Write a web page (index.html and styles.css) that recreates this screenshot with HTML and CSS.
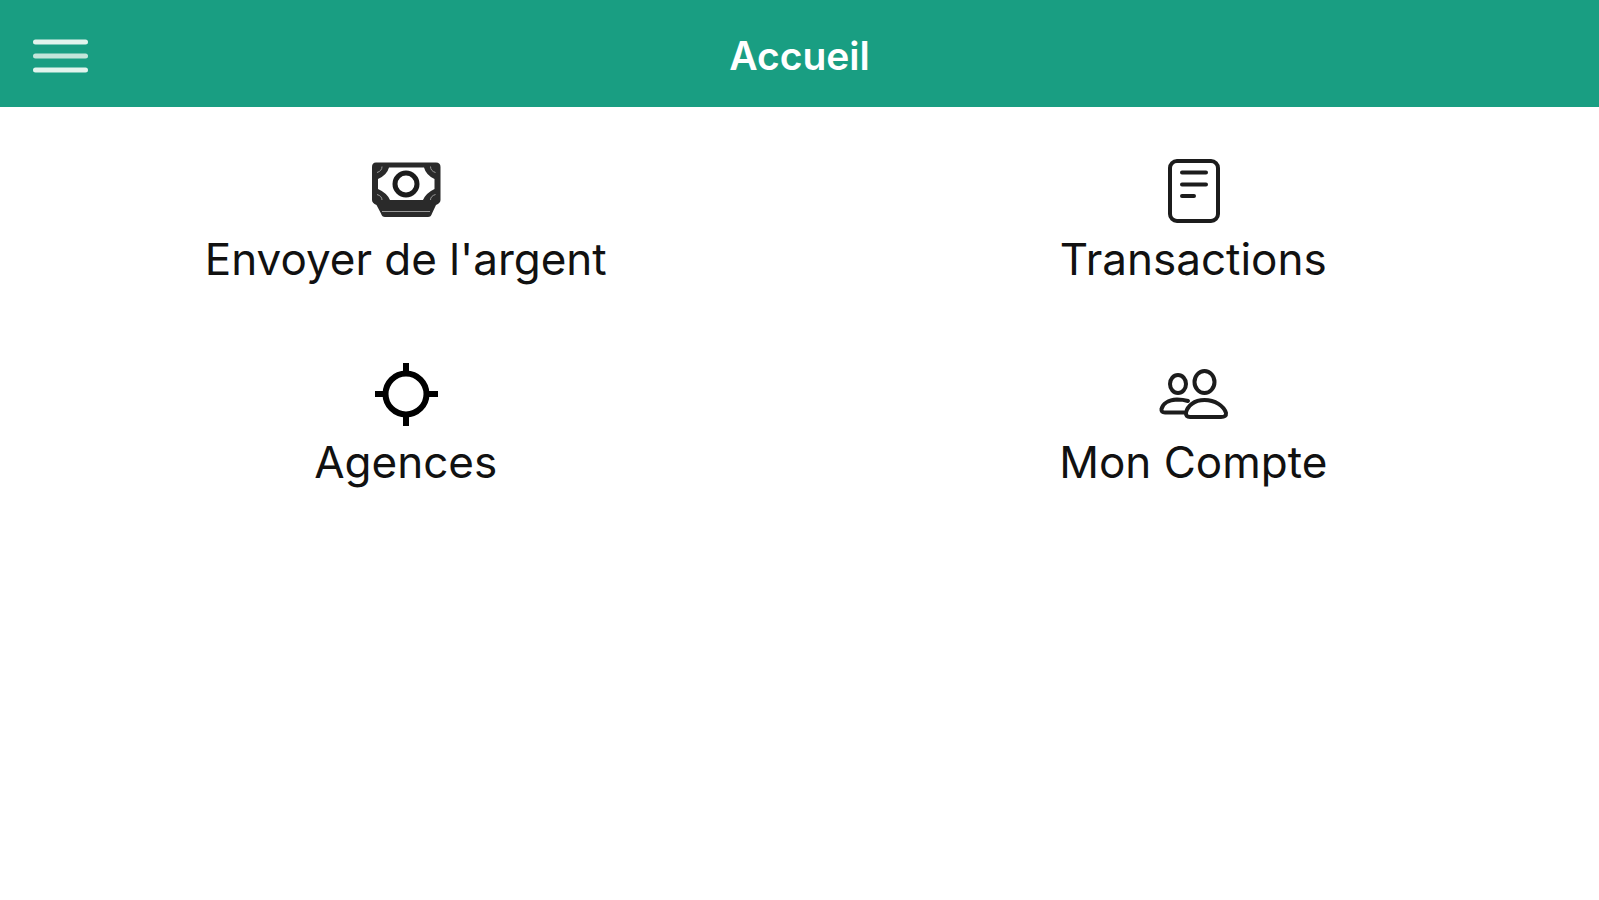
FILE: index.html
```html
<!DOCTYPE html>
<html lang="fr">
<head>
<meta charset="utf-8">
<meta name="viewport" content="width=device-width, initial-scale=1">
<title>Accueil</title>
<link rel="stylesheet" href="styles.css">
</head>
<body>
<header class="bar">
  <button class="menu" type="button" aria-label="Menu">
    <svg class="menu-icon" viewBox="0 0 56 34" aria-hidden="true">
      <path d="M3.500 3h50M3.500 31h50"/>
      <path class="middle" d="M3.500 17h50"/>
    </svg>
  </button>
  <h1 class="title">Accueil</h1>
</header>
<main class="grid">
  <a class="tile" href="#envoyer">
    <svg class="icon" viewBox="0 0 68 68" aria-hidden="true">
      <path class="solid" fill-rule="evenodd" d="M4 5.500H64Q68.500 5.500 68.500 10V43Q68.500 46 64 48L60 56.500Q59 60 56 60H13Q10 60 9 56.500L4.500 48Q0 46 0 43V10Q0 5.500 4 5.500ZM17 10.500Q15 18 6 22V32Q15 36 18 43H51Q54 36 62.500 32V22Q54 18 52 10.500Z"/>
      <circle class="line ring" cx="34" cy="27" r="11"/>
      <path class="slit" d="M10 9.500Q10 14 5 15.500M58.500 9.500Q58.500 14 63.500 15.500M10 43Q10 39 5 37.500M58.500 43Q58.500 39 63.500 37.500M10 54.500H58"/>
    </svg>
    <span class="label">Envoyer de l'argent</span>
  </a>
  <a class="tile" href="#transactions">
    <svg class="icon" viewBox="0 0 68 68" aria-hidden="true">
      <rect class="line" x="11" y="4" width="48" height="60" rx="7"/>
      <path class="line round" d="M23 15.500H47M23 27.500H47M23 39H35"/>
    </svg>
    <span class="label">Transactions</span>
  </a>
  <a class="tile" href="#agences">
    <svg class="icon" viewBox="0 0 68 68" aria-hidden="true">
      <circle class="line heavy" cx="34" cy="34" r="20.500"/>
      <path class="line heavy" d="M34 3V14M34 54V66M3 34H14M54 34H66"/>
    </svg>
    <span class="label">Agences</span>
  </a>
  <a class="tile" href="#compte">
    <svg class="icon" viewBox="0 0 68 68" aria-hidden="true">
      <ellipse class="line" cx="45.500" cy="22" rx="10" ry="11"/>
      <ellipse class="line" cx="19" cy="24" rx="8" ry="9"/>
      <path class="line" d="M45.500 40C35 40 28.500 46 27 52.500Q26.500 57 31 57H62Q67.500 57 67 53C65 46 56 40 45.500 40Z"/>
      <path class="line round" d="M29 41Q24 39.500 18 39.500C9 40 3.500 44 2.500 49Q2 52.500 6 52.500H25"/>
    </svg>
    <span class="label">Mon Compte</span>
  </a>
</main>
</body>
</html>
```
FILE: styles.css
```css
* {
  box-sizing: border-box;
}

body {
  margin: 0;
  background: #fff;
  color: #111;
  font-family: Inter, "Liberation Sans", sans-serif;
}

.bar {
  display: grid;
  grid-template-columns: 1fr auto 1fr;
  align-items: center;
  padding: 30px 32px 25px;
  background: #199e82;
  color: #fff;
}

.menu {
  justify-self: start;
  display: flex;
  padding: 0;
  border: 0;
  background: none;
  color: #e2f4ed;
  cursor: pointer;
}

.menu-icon {
  width: 56px;
  height: 34px;
  fill: none;
  stroke: currentColor;
  stroke-width: 5;
  stroke-linecap: round;
}

.middle {
  stroke: #c3e5da;
}

.title {
  margin: 0;
  font-size: 39px;
  line-height: 52px;
  font-weight: 600;
}

.grid {
  display: grid;
  grid-template-columns: 1fr 1fr;
  row-gap: 71px;
  padding: 50px 12px;
}

.tile {
  display: flex;
  flex-direction: column;
  align-items: center;
  color: inherit;
  text-decoration: none;
}

.icon {
  width: 68px;
  height: 68px;
  overflow: visible;
}

.label {
  margin-top: 4px;
  font-size: 44px;
  line-height: 60px;
}

.solid {
  fill: #2a2a2a;
}

.line {
  fill: none;
  stroke: #1c1c1c;
  stroke-width: 4;
}

.ring {
  stroke-width: 5;
}

.round {
  stroke-linecap: round;
}

.heavy {
  stroke: #000;
  stroke-width: 6;
}

.slit {
  fill: none;
  stroke: #999;
  stroke-width: 1;
}
```
